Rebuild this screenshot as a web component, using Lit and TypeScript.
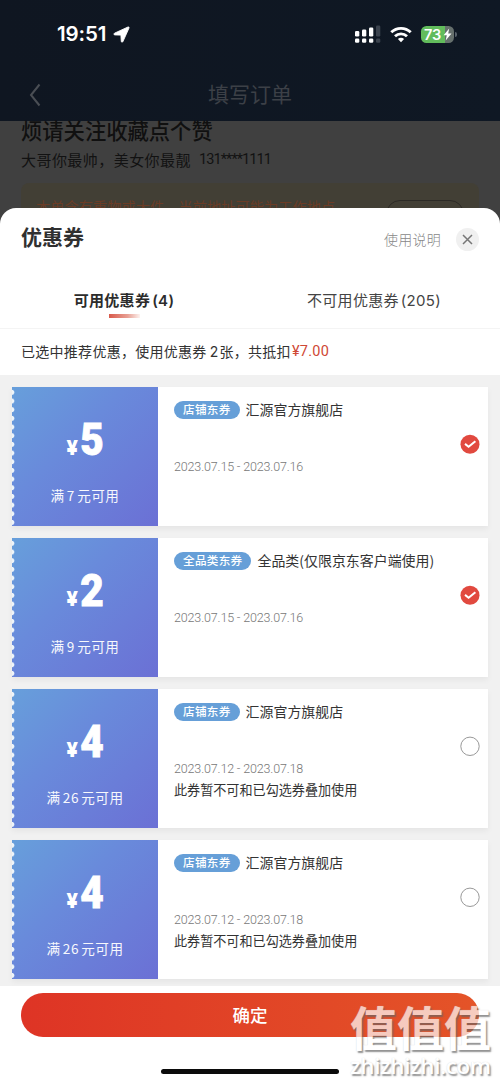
import { LitElement, html, css, svg, nothing } from "lit";
import { customElement, property } from "lit/decorators.js";

interface Coupon {
  amount: string;
  rule: string;
  tag: string;
  title: string;
  dates: string;
  note?: string;
  checked: boolean;
}

const coupons: Coupon[] = [
  { amount: "5", rule: "满 7 元可用", tag: "店铺东券", title: "汇源官方旗舰店", dates: "2023.07.15 - 2023.07.16", checked: true },
  { amount: "2", rule: "满 9 元可用", tag: "全品类东券", title: "全品类(仅限京东客户端使用)", dates: "2023.07.15 - 2023.07.16", checked: true },
  { amount: "4", rule: "满 26 元可用", tag: "店铺东券", title: "汇源官方旗舰店", dates: "2023.07.12 - 2023.07.18", note: "此券暂不可和已勾选券叠加使用", checked: false },
  { amount: "4", rule: "满 26 元可用", tag: "店铺东券", title: "汇源官方旗舰店", dates: "2023.07.12 - 2023.07.18", note: "此券暂不可和已勾选券叠加使用", checked: false },
];

@customElement("status-bar")
export class StatusBar extends LitElement {
  static styles = css`
    :host { display: flex; align-items: center; height: 68px; padding: 0 43px 0 57px; color: #fff; font-family: Inter, sans-serif; }
    .time { font-size: 20.5px; font-weight: 600; line-height: 24px; width: 51px; white-space: nowrap; letter-spacing: -0.1px; }
    .arrow { margin-left: 4.5px; }
    .right { margin-left: auto; display: flex; align-items: center; gap: 9px; }
    svg { display: block; }
    .battery { display: flex; align-items: center; gap: 1px; }
    .cell { display: flex; align-items: center; width: 33px; height: 17px; border-radius: 5.5px; background: linear-gradient(90deg, #62bc5c 73%, #66706d 73%); box-sizing: border-box; padding-left: 3px; }
    .pct { font-size: 14.5px; font-weight: 600; line-height: 17px; width: 19px; }
    .nub { width: 2px; height: 5px; border-radius: 0 2px 2px 0; background: #57606a; }
  `;
  render() {
    return html`
      <span class="time">19:51</span>
      <svg class="arrow" width="17" height="17" viewBox="0 0 17 17"><path d="M15 1 1.500 7.200c-.9.500-.7 1.700.3 1.700l6.100.2.400 6.300c.1.900 1.100 1.100 1.600.2L16 2c.3-.7-.3-1.300-1-1z" fill="#fff" stroke="#fff" stroke-width=".9"/></svg>
      <div class="right">
        <svg width="26" height="18" viewBox="0 0 26 18" fill="#fff">
          <rect x="0" y="6" width="4.300" height="5.500" rx="1.300"/><rect x="7" y="4.500" width="4.300" height="7" rx="1.300"/><rect x="14" y="2.500" width="4.300" height="9" rx="1.300"/><rect x="21" y=".5" width="4.300" height="11" rx="1.300" fill="#3b434e"/>
          <rect x="0" y="13.500" width="4.300" height="4.300" rx="1.300"/><rect x="7" y="13.500" width="4.300" height="4.300" rx="1.300"/><rect x="14" y="13.500" width="4.300" height="4.300" rx="1.300"/><rect x="21" y="13.500" width="4.300" height="4.300" rx="1.300" fill="#3b434e"/>
        </svg>
        <svg width="22" height="17" viewBox="0 0 22 17" fill="none" stroke="#fff" stroke-width="2.900">
          <path d="M1.300 6.300a14 14 0 0 1 19.400 0"/><path d="M5 10.200a8.800 8.800 0 0 1 12 0"/><path d="M11 16.300 7.900 13.100a4.500 4.500 0 0 1 6.200 0z" fill="#fff" stroke="none"/>
        </svg>
        <div class="battery">
          <div class="cell"><span class="pct">73</span>
            <svg width="9" height="13" viewBox="0 0 9 13"><path d="M6.200.4.600 7.200h3.200L2.700 12.600 8.500 5.600H5.200z" fill="#fff"/></svg>
          </div>
          <div class="nub"></div>
        </div>
      </div>`;
  }
}

@customElement("coupon-card")
export class CouponCard extends LitElement {
  @property({ attribute: false }) coupon!: Coupon;
  static styles = css`
    :host { display: flex; height: 139px; background: #fff; box-shadow: 0 3px 6px rgba(0, 0, 0, 0.05); }
    .face { width: 146px; flex: none; box-sizing: border-box; padding-top: 30px; color: #fff; display: flex; flex-direction: column; align-items: center;
      background: radial-gradient(circle at 0 50%, #eef5fa 2px, transparent 2.800px) 0 1px / 4px 8.680px repeat-y, linear-gradient(135deg, #679fdb 0%, #698adb 40%, #6b70d5 100%); }
    .amount { display: flex; align-items: baseline; height: 46px; line-height: 46px; font-family: Roboto, sans-serif; font-weight: 900; }
    .yen { font-size: 19.500px; width: 13px; transform: scaleX(1.080); }
    .num { font-size: 45px; width: 24px; display: flex; justify-content: center; transform: scaleX(0.900); -webkit-text-stroke: 0.900px #fff; }
    .rule { margin-top: 22px; font-size: 13.600px; line-height: 20px; letter-spacing: 0.500px; word-spacing: -1.300px; white-space: nowrap; opacity: 0.95; }
    .info { flex: 1; padding: 13px 0 0 16px; color: #333; min-width: 0; white-space: nowrap; }
    .head { display: flex; align-items: center; height: 20px; gap: 6px; }
    .tag { background: #669fd8; color: #fff; border-radius: 9px; height: 17.500px; line-height: 17.500px; padding: 0 9px; font-size: 11.600px; letter-spacing: 0.300px; font-weight: 500; }
    .title { font-size: 13.950px; line-height: 20px; margin-top: -2px; }
    .dates { margin-top: 38px; height: 18px; line-height: 18px; font-family: Roboto, sans-serif; font-weight: 300; font-size: 12.500px; color: #777; letter-spacing: -0.150px; }
    .note { margin-top: 2px; font-size: 13.100px; line-height: 20px; }
    .pick { width: 28px; flex: none; padding-top: 47px; }
    svg { display: block; }
  `;
  render() {
    const c = this.coupon;
    return html`
      <div class="face">
        <div class="amount"><span class="yen">¥</span><span class="num">${c.amount}</span></div>
        <div class="rule">${c.rule}</div>
      </div>
      <div class="info">
        <div class="head"><span class="tag">${c.tag}</span><span class="title">${c.title}</span></div>
        <div class="dates">${c.dates}</div>
        ${c.note ? html`<div class="note">${c.note}</div>` : nothing}
      </div>
      <div class="pick">
        <svg width="20" height="20" viewBox="0 0 20 20">
          ${c.checked
            ? svg`<circle cx="10" cy="10.300" r="9.500" fill="#e1493f"/><path d="M5 9.900 8.600 12.800 15.400 7.200" fill="none" stroke="#fff" stroke-width="2"/>`
            : svg`<circle cx="10" cy="10.300" r="9.200" fill="#fff" stroke="#8c8c8c" stroke-width=".9"/>`}
        </svg>
      </div>`;
  }
}

@customElement("app-root")
export class AppRoot extends LitElement {
  static styles = css`
    :host { display: flex; flex-direction: column; width: 500px; height: 1084px; overflow: hidden; position: relative; background: #fff; font-family: "Noto Sans CJK SC", sans-serif; color: #333; }
    .backdrop { height: 224px; flex: none; overflow: hidden; background: #404040; }
    .navy { height: 121px; background: linear-gradient(90deg, #0f1621, #0f1824); }
    .nav { display: grid; grid-template-columns: 60px 1fr 60px; align-items: center; height: 53px; }
    .nav svg { margin-left: 29px; display: block; }
    .nav-title { text-align: center; font-size: 21px; line-height: 30px; margin-top: -4px; color: #3c4047; }
    .address { padding: 0 21px; }
    .place { font-size: 21.300px; line-height: 28px; margin-top: -5px; font-weight: 500; color: #101010; }
    .person { display: flex; font-size: 15px; line-height: 22px; margin-top: 5px; letter-spacing: 0.450px; color: #121212; white-space: nowrap; }
    .phone { font-family: Roboto, sans-serif; font-size: 14.500px; letter-spacing: -0.900px; margin-left: 8px; }
    .warn { margin-top: 12px; height: 60px; background: #423f35; border-radius: 8px; display: flex; justify-content: space-between; padding: 0 15px; color: #6b3c26; font-size: 14.250px; line-height: 20px; white-space: nowrap; }
    .warn-text { padding-top: 14px; }
    .warn-btn { width: 76px; height: 28px; border: 1px solid #2c2a26; border-radius: 14px; margin-top: 17px; }
    .sheet { margin-top: -16px; background: #fff; border-radius: 16px 16px 0 0; flex: 1; display: flex; flex-direction: column; min-height: 0; }
    .head { height: 63px; flex: none; display: flex; align-items: center; padding: 0 21px; box-sizing: border-box; }
    .head-title { font-size: 21px; font-weight: 700; line-height: 30px; margin-top: -8px; color: #303030; }
    .help { margin-left: auto; color: #888; font-size: 14px; letter-spacing: 0.250px; font-weight: 300; margin-top: -1px; }
    .close { width: 23px; height: 23px; border-radius: 50%; background: #f0f0f0; margin-left: 15px; display: grid; place-items: center; }
    .tabs { height: 57px; flex: none; display: grid; grid-template-columns: 248px 252px; border-bottom: 1px solid #f4f4f4; font-size: 15px; letter-spacing: 0.300px; }
    .tab { text-align: center; line-height: 22px; padding-top: 18px; color: #444; }
    .tab.active { font-weight: 700; color: #2c2c2c; }
    .cnt { font-family: Inter, "Noto Sans CJK SC", sans-serif; margin-left: 2px; }
    .active .cnt { font-weight: 600; }
    .bar { width: 31px; height: 4px; margin: 2px auto 0; background: linear-gradient(90deg, #d95a4b, #e8a094 60%, #fdf2ef); }
    .notice { height: 46px; flex: none; padding: 0 21px; display: flex; line-height: 44px; font-size: 14px; letter-spacing: 0.280px; white-space: nowrap; }
    .two { margin: 0 1px 0 3px; font-family: Inter, sans-serif; line-height: 45px; }
    .save { color: #cf4835; font-family: Roboto, sans-serif; font-size: 14.500px; line-height: 46px; margin-left: 1px; }
    .list { background: #f1f1f1; height: 611px; flex: none; box-sizing: border-box; padding: 12px 12px 0; display: flex; flex-direction: column; gap: 12px; }
    .foot { padding: 7px 21px 0; }
    .confirm { height: 44px; border-radius: 22px; background: linear-gradient(90deg, #de3425, #e45428); color: #fff; text-align: center; line-height: 43px; font-size: 17.500px; font-weight: 500; }
    .home { width: 178px; height: 5px; border-radius: 3px; background: #0b0b0b; margin: 32px auto 0; }
    .mark { position: absolute; left: 350px; top: 1001px; width: 150px; opacity: 0.7; color: #fff; white-space: nowrap; text-shadow: 1.500px 1.500px 1.500px #666, 0 0 1px #ccc; }
    .mark-cn { font-size: 47px; font-weight: 700; line-height: 50px; height: 54px; }
    .mark-en { font-family: "Open Sans", sans-serif; font-weight: 600; font-size: 22.300px; line-height: 22px; letter-spacing: -0.350px; }
  `;
  render() {
    return html`
      <div class="backdrop">
        <div class="navy">
          <status-bar></status-bar>
          <div class="nav">
            <svg width="13" height="24" viewBox="0 0 13 24"><path d="M10.500 1.500 2 12l8.500 10.500" fill="none" stroke="#4a4e54" stroke-width="2"/></svg>
            <span class="nav-title">填写订单</span>
          </div>
        </div>
        <div class="address">
          <div class="place">烦请关注收藏点个赞</div>
          <div class="person">大哥你最帅，美女你最靓<span class="phone">131****1111</span></div>
          <div class="warn"><span class="warn-text">本单含有重物或大件，当前地址可能为工作地点</span><span class="warn-btn"></span></div>
        </div>
      </div>
      <div class="sheet">
        <div class="head">
          <span class="head-title">优惠券</span>
          <span class="help">使用说明</span>
          <span class="close"><svg width="11" height="11" viewBox="0 0 11 11"><path d="M1 1l9 9M10 1l-9 9" stroke="#777" stroke-width="1.500"/></svg></span>
        </div>
        <div class="tabs">
          <div class="tab active">可用优惠券<span class="cnt">(4)</span><div class="bar"></div></div>
          <div class="tab">不可用优惠券<span class="cnt">(205)</span></div>
        </div>
        <div class="notice">已选中推荐优惠，使用优惠券<span class="two">2</span>张，共抵扣<span class="save">¥7.00</span></div>
        <div class="list">${coupons.map((c) => html`<coupon-card .coupon=${c}></coupon-card>`)}</div>
        <div class="foot">
          <div class="confirm">确定</div>
          <div class="home"></div>
        </div>
      </div>
      <div class="mark"><div class="mark-cn">值值值</div><div class="mark-en">zhizhizhi.com</div></div>`;
  }
}
